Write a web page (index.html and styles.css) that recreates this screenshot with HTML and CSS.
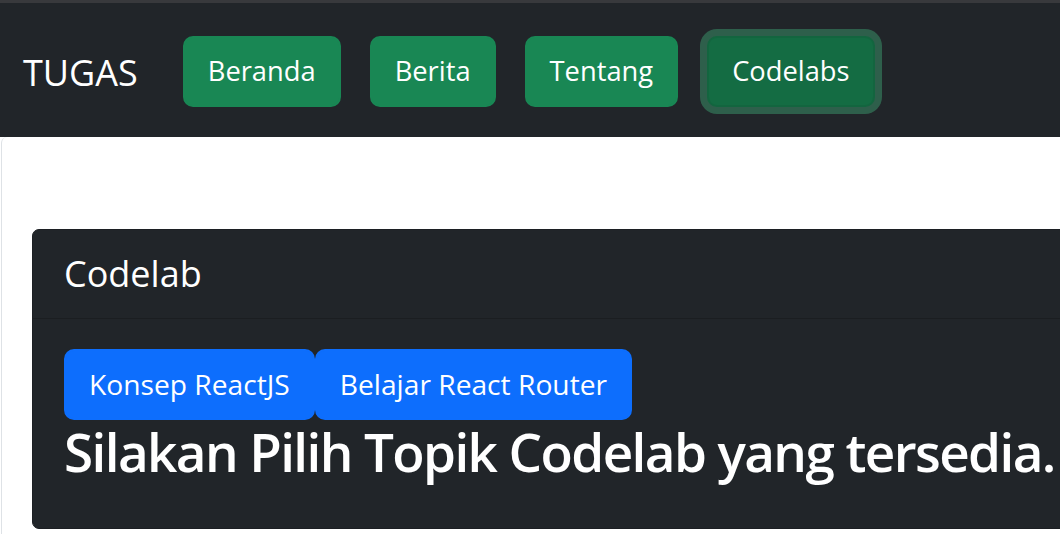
FILE: index.html
```html
<!DOCTYPE html>
<html lang="id">
<head>
<meta charset="utf-8">
<title>TUGAS</title>
<link rel="stylesheet" href="styles.css">
</head>
<body>
<nav class="navbar">
  <a class="brand" href="#">TUGAS</a>
  <div class="nav-buttons">
    <button class="btn btn-success">Beranda</button>
    <button class="btn btn-success">Berita</button>
    <button class="btn btn-success">Tentang</button>
    <button class="btn btn-success is-active">Codelabs</button>
  </div>
</nav>
<main class="page">
  <section class="card">
    <header class="card-header">Codelab</header>
    <div class="card-body">
      <div class="topic-buttons">
        <button class="btn btn-primary">Konsep ReactJS</button>
        <button class="btn btn-primary">Belajar React Router</button>
      </div>
      <h2 class="title">Silakan Pilih Topik Codelab yang tersedia.</h2>
    </div>
  </section>
</main>
</body>
</html>
```

FILE: styles.css
```css
html, body {
  margin: 0;
  padding: 0;
  overflow: hidden;
  background: #ffffff;
  font-family: "Open Sans", "Noto Sans", sans-serif;
}

.navbar {
  display: flex;
  align-items: flex-start;
  background: #212529;
  border-top: 3px solid #38393c;
  height: 137px;
  box-sizing: border-box;
  padding: 33px 0 0 23px;
}

.brand {
  color: #ffffff;
  text-decoration: none;
  font-size: 36px;
  line-height: 51px;
  margin-top: 11px;
  margin-right: 45px;
}

.nav-buttons {
  display: flex;
  gap: 29px;
}

.btn {
  font-family: inherit;
  font-size: 27.3px;
  line-height: 44.5px;
  padding: 11px 23px;
  border: 2px solid transparent;
  border-radius: 10px;
  color: #ffffff;
  cursor: pointer;
}

.btn-success {
  background: #198754;
  border-color: #198754;
}

.btn-success.is-active {
  background: #146c43;
  border-color: #13653f;
  box-shadow: 0 0 0 7px rgba(60, 153, 110, 0.5);
}

.btn-primary {
  background: #0d6efd;
  border-color: #0d6efd;
}

.page {
  margin-left: 1px;
  border-left: 1px solid #dee2e6;
  border-top-left-radius: 6px;
  padding: 92px 0 0 30px;
}

.card {
  display: inline-block;
  background: #212529;
  color: #ffffff;
  border: 1px solid #1c1f23;
  border-radius: 7px;
  overflow: hidden;
}

.card-header {
  font-size: 36px;
  line-height: 88px;
  padding: 0 31px;
  border-bottom: 1px solid #1b1e21;
}

.card-body {
  padding: 30px 31px 44px;
}

.topic-buttons {
  display: flex;
}

.topic-buttons .btn {
  font-size: 28.2px;
  line-height: 45px;
}

.title {
  margin: 0;
  font-size: 53px;
  letter-spacing: -1.6px;
  font-weight: 600;
  line-height: 64px;
  white-space: nowrap;
}
```
